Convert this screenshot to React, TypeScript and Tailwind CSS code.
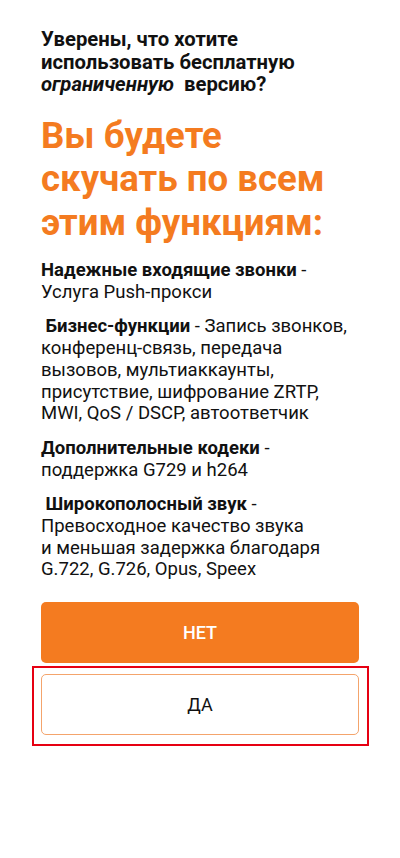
export default function App() {
  const font = { fontFamily: 'Roboto, "Noto Sans", sans-serif' };

  return (
    <div className="min-h-[858px] w-full bg-white text-[#111]" style={font}>
      <div className="px-[41px] pt-[28px]">
        <h1 className="text-[20.3px] font-bold leading-[22.5px]">
          Уверены, что хотите
          <br />
          использовать бесплатную
          <br />
          <i>ограниченную</i>&nbsp; версию?
        </h1>

        <h2 className="mt-[18px] text-[36.6px] font-bold leading-[43.5px] text-[#f47b20]">
          Вы будете
          <br />
          скучать по всем
          <br />
          этим функциям:
        </h2>

        <div className="mt-[16px] flex flex-col gap-[13px] text-[18.5px] leading-[21.7px]">
          <p>
            <b>Надежные входящие звонки</b> -
            <br />
            Услуга Push-прокси
          </p>
          <p>
            &nbsp;<b>Бизнес-функции</b> - Запись звонков,
            <br />
            конференц-связь, передача
            <br />
            вызовов, мультиаккаунты,
            <br />
            присутствие, шифрование ZRTP,
            <br />
            MWI, QoS / DSCP, автоответчик
          </p>
          <p>
            <b>Дополнительные кодеки</b> -
            <br />
            поддержка G729 и h264
          </p>
          <p>
            &nbsp;<b>Широкополосный звук</b> -
            <br />
            Превосходное качество звука
            <br />
            и меньшая задержка благодаря
            <br />
            G.722, G.726, Opus, Speex
          </p>
        </div>

        <button className="mt-[21px] flex h-[61px] w-full items-center justify-center rounded-[5px] bg-[#f47b20] text-[18px] font-medium text-white">
          НЕТ
        </button>

        <div className="-ml-[9px] -mr-[10px] mt-[3px] border-2 border-[#e60012] pb-[9px] pl-[7px] pr-[8px] pt-[6px]">
          <button className="flex h-[61px] w-full items-center justify-center rounded-[5px] border border-[#f4a46c] bg-white text-[18px] text-[#111]">
            ДА
          </button>
        </div>
      </div>
    </div>
  );
}
